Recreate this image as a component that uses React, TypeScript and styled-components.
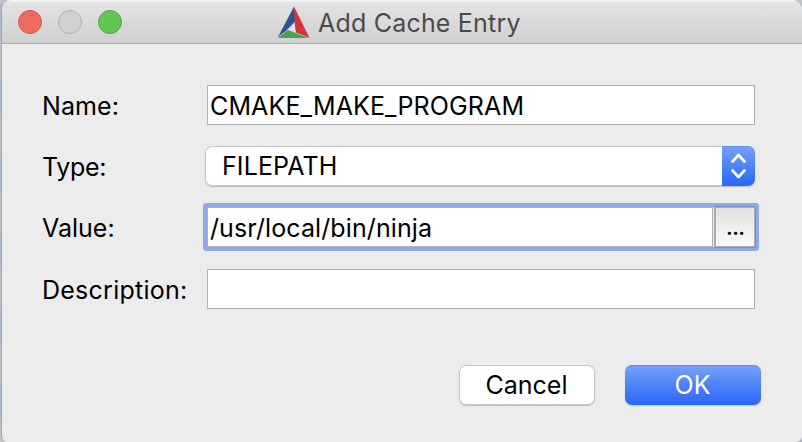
import React from "react";
import styled, { createGlobalStyle } from "styled-components";

const GlobalStyle = createGlobalStyle`
  * { box-sizing: border-box; }
  body { margin: 0; overflow: hidden; }
`;

const Desktop = styled.div`
  width: 802px;
  height: 442px;
  padding-left: 1px;
  background:
    linear-gradient(#a9b0bb, #a9b0bb) right bottom / 20px 20px no-repeat,
    repeating-linear-gradient(180deg, #c3c3c3 0 4px, #adb9cd 4px 40px, #c3c3c3 40px 76px);
  font-family: Inter, "Liberation Sans", sans-serif;
  font-size: 25px;
  color: #000;
`;

const Window = styled.div`
  width: 801px;
  height: 442px;
  border-left: 1px solid #a5a5a5;
  border-radius: 10px 10px 6px 6px;
  background: #ececec;
  overflow: hidden;
`;

const TitleBar = styled.header`
  display: flex;
  height: 44px;
  padding-left: 16px;
  border-bottom: 1px solid #adadad;
  background: linear-gradient(#f5f5f5 0 1px, #e4e4e4 2px, #d0d0d0);
`;

const Lights = styled.div`
  display: flex;
  gap: 16px;
  padding-top: 10px;
  width: 259px;
`;

const Light = styled.span<{ $fill: string; $edge: string }>`
  width: 24px;
  height: 24px;
  border: 1px solid ${(p) => p.$edge};
  border-radius: 50%;
  background: ${(p) => p.$fill};
`;

const Logo = styled.svg`
  width: 34px;
  height: 34px;
  margin-top: 5px;
`;

const Title = styled.h1`
  margin: 0 0 0 7px;
  font-size: 25px;
  font-weight: 400;
  line-height: 46px;
  letter-spacing: 0.2px;
  color: #4a4a4a;
`;

const Form = styled.form`
  display: grid;
  grid-template-columns: 165px 548px;
  grid-template-rows: 61px 61px 62px 40px;
  padding: 41px 0 0 40px;
`;

const Label = styled.label<{ $spacing?: number }>`
  height: 40px;
  line-height: 42px;
  white-space: nowrap;
  letter-spacing: ${(p) => p.$spacing ?? 0}px;
`;

const Field = styled.div<{ $spacing?: number }>`
  height: 40px;
  padding-left: 2px;
  border: 1px solid #b0b0b0;
  background: #fff;
  line-height: 40px;
  white-space: nowrap;
  letter-spacing: ${(p) => p.$spacing ?? 0}px;
`;

const Select = styled.div`
  display: flex;
  height: 40px;
  margin-left: -2px;
  border-radius: 7px;
  background: #fff;
  box-shadow: inset 0 0 0 1px #c6c6c6, 0 1px 1px #bdbdbd;
  overflow: hidden;
`;

const SelectText = styled.span`
  flex: 1;
  padding-left: 17px;
  line-height: 40px;
  letter-spacing: 0.1px;
`;

const Stepper = styled.span`
  width: 33px;
  background: linear-gradient(#76a2f7, #4a80f7 55%, #2a66fa);
  box-shadow: inset 0 1px 0 #6490e4;
`;

const PathRow = styled.div`
  display: grid;
  grid-template-columns: 506px 41px;
  column-gap: 1px;
  height: 40px;
  border-radius: 1px;
  background: #ececec;
  box-shadow: 0 0 0 4px #8fa9ec;
`;

const Browse = styled.button`
  padding: 0 0 2px;
  border: 1px solid #abadb3;
  border-left-width: 2px;
  background: linear-gradient(#e2e2e2, #f9f9f9);
  box-shadow: 1px 0 0 #748cc8, 0 -1px 0 #748cc8, 0 1px 0 #748cc8;
  font: 25px Inter, sans-serif;
  line-height: 34px;
  letter-spacing: -1px;
  color: #000;
`;

const Actions = styled.footer`
  display: flex;
  gap: 30px;
  padding: 56px 0 0 457px;
`;

const Button = styled.button<{ $primary?: boolean }>`
  width: 136px;
  height: 40px;
  padding: 0 1px 0 0;
  border: 0;
  border-radius: 7px;
  font: 25px Inter, sans-serif;
  line-height: 40px;
  color: ${(p) => (p.$primary ? "#fff" : "#000")};
  background: ${(p) => (p.$primary ? "linear-gradient(#76a2f7, #4a80f7 55%, #2a66fa)" : "#fff")};
  box-shadow: ${(p) =>
    p.$primary
      ? "inset 0 1px 0 #6490e4, 0 1px 1px #c8cede"
      : "inset 0 0 0 1px #c6c6c6, 0 1px 1px #bdbdbd"};
`;

export default function App() {
  return (
    <Desktop>
      <GlobalStyle />
      <Window>
        <TitleBar>
          <Lights>
            <Light $fill="#ee6a5f" $edge="#d9534a" />
            <Light $fill="#d0d0d0" $edge="#b0b0b0" />
            <Light $fill="#61c654" $edge="#4aab3d" />
          </Lights>
          <Logo viewBox="0 0 34 34">
            <path d="M17 1.5 L19 18 L1 32 Z" fill="#2b5592" />
            <path d="M17 1.5 L32.5 33 L18 27 Z" fill="#d6333b" />
            <path d="M17.5 17 L19 28 L10 25 Z" fill="#dce2e9" />
            <path d="M1 33 L11 25 L31 33 Z" fill="#46a04e" />
          </Logo>
          <Title>Add Cache Entry</Title>
        </TitleBar>
        <Form>
          <Label $spacing={0.1}>Name:</Label>
          <Field $spacing={0.13}>CMAKE_MAKE_PROGRAM</Field>
          <Label $spacing={-0.3}>Type:</Label>
          <Select>
            <SelectText>FILEPATH</SelectText>
            <Stepper>
              <svg width="33" height="40" viewBox="0 0 33 40" fill="none" stroke="#fff" strokeWidth="2.6" strokeLinecap="round" strokeLinejoin="round">
                <path d="M10.5 15.5 L16.5 9 L22.5 15.5 M10.5 24.5 L16.5 31 L22.5 24.5" />
              </svg>
            </Stepper>
          </Select>
          <Label>Value:</Label>
          <PathRow>
            <Field $spacing={0.1}>/usr/local/bin/ninja</Field>
            <Browse type="button">...</Browse>
          </PathRow>
          <Label $spacing={0.25}>Description:</Label>
          <Field />
        </Form>
        <Actions>
          <Button type="button">Cancel</Button>
          <Button type="button" $primary>OK</Button>
        </Actions>
      </Window>
    </Desktop>
  );
}
